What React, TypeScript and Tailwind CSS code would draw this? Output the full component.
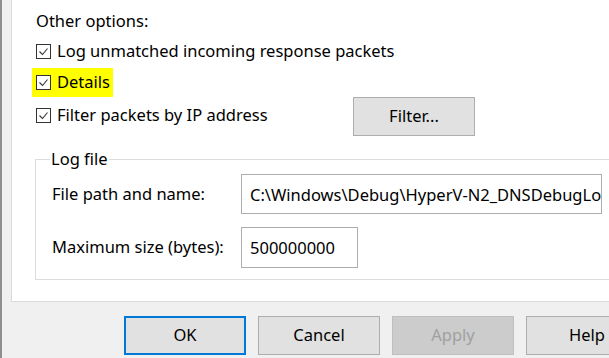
import React from 'react';

const font = { fontFamily: '"Noto Sans", "Liberation Sans", sans-serif' };

function CheckBox({ label, highlight }: { label: string; highlight?: boolean }) {
  return (
    <label className={`flex items-center h-full ${highlight ? 'bg-[#ffff00] -ml-[4px] pl-[4px] pr-[3px]' : ''}`}>
      <span className="w-[15px] h-[15px] border border-[#333333] bg-white flex items-center justify-center shrink-0">
        <svg width="11" height="11" viewBox="0 0 11 11">
          <path d="M1.5 5.5 L4.5 8.5 L9.5 2.5" fill="none" stroke="#333333" strokeWidth="1.1" />
        </svg>
      </span>
      <span className="ml-[6px] whitespace-nowrap">{label}</span>
    </label>
  );
}

function Button({ label, kind }: { label: string; kind?: 'default' | 'disabled' }) {
  const cls =
    kind === 'default'
      ? 'border-2 border-[#0078d7] bg-[#e1e1e1] text-black'
      : kind === 'disabled'
        ? 'border border-[#bfbfbf] bg-[#cccccc] text-[#a0a0a0]'
        : 'border border-[#adadad] bg-[#e1e1e1] text-black';
  return (
    <div className={`w-[122px] h-[39px] shrink-0 flex items-center justify-center ${cls}`}>{label}</div>
  );
}

export default function App() {
  return (
    <div
      className="w-[609px] h-[358px] overflow-hidden bg-[#f0f0f0] border-l-2 border-[#8f8f8f] text-[16.5px] text-black"
      style={font}
    >
      <div className="ml-[9px] w-[700px] h-[302px] bg-white border-l border-b border-[#dadada] pl-[24px] pt-[8px]">
        <div className="h-[26px] flex items-center">Other options:</div>
        <div className="h-[34px]">
          <CheckBox label="Log unmatched incoming response packets" />
        </div>
        <div className="h-[29px] flex">
          <CheckBox label="Details" highlight />
        </div>
        <div className="h-[40px] flex items-start">
          <div className="w-[317px] h-[22px] mt-[7px] shrink-0">
            <CheckBox label="Filter packets by IP address" />
          </div>
          <Button label="Filter..." />
        </div>

        <fieldset className="mt-[10px] -ml-[1px] w-[640px] border border-[#dcdcdc] px-[16px] pt-[3px] pb-[11px]">
          <legend className="-ml-[2px] px-[1px] leading-[24px]">Log file</legend>
          <div className="flex items-center h-[40px]">
            <div className="w-[189px] shrink-0">File path and name:</div>
            <input
              readOnly
              value="C:\Windows\Debug\HyperV-N2_DNSDebugLog.log"
              className="w-[361px] h-[40px] border border-[#adadad] pl-[8px] outline-none text-black"
            />
          </div>
          <div className="flex items-center h-[41px] mt-[13px]">
            <div className="w-[189px] shrink-0">Maximum size (bytes):</div>
            <input
              readOnly
              value="500000000"
              className="w-[117px] h-[41px] border border-[#adadad] pl-[8px] outline-none text-black"
            />
          </div>
        </fieldset>
      </div>

      <div className="flex gap-[12px] pl-[122px] mt-[14px]">
        <Button label="OK" kind="default" />
        <Button label="Cancel" />
        <Button label="Apply" kind="disabled" />
        <Button label="Help" />
      </div>
    </div>
  );
}
